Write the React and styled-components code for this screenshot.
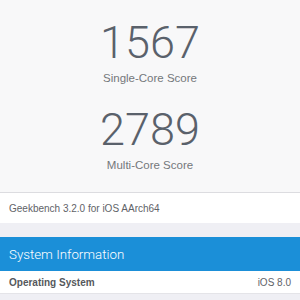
import React from "react";
import styled, { createGlobalStyle } from "styled-components";

const GlobalStyle = createGlobalStyle`
  html, body {
    margin: 0;
    padding: 0;
    background: #efeff4;
  }
  body {
    font-family: "Liberation Sans", Arial, sans-serif;
    -webkit-font-smoothing: antialiased;
  }
`

const Page = styled.div`
  width: 300px;
  height: 300px;
  overflow: hidden;
  display: flex;
  flex-direction: column;
  background: #efeff4;
`

const ScorePanel = styled.div`
  background: #f8f8f9;
  border-bottom: 1px solid #dcdce0;
  display: flex;
  flex-direction: column;
  align-items: center;
  padding-top: 18px;
  height: 174px;
`

const ScoreBlock = styled.div`
  display: flex;
  flex-direction: column;
  align-items: center;
  height: 89px;
`

const ScoreValue = styled.div`
  font-family: "Roboto", "Liberation Sans", sans-serif;
  font-weight: 300;
  font-size: 45px;
  line-height: 50px;
  color: #5a616b;
`

const ScoreLabel = styled.div`
  font-size: 11.5px;
  line-height: 14px;
  margin-top: 3px;
  color: #74777b;
`

const VersionRow = styled.div`
  background: #ffffff;
  height: 30px;
  display: flex;
  align-items: center;
  padding: 0 9px;
  font-size: 10px;
  color: #5f6368;
`

const Gap = styled.div`
  height: 14px;
`

const SectionHeader = styled.div`
  background: #1b8fd8;
  height: 34px;
  display: flex;
  align-items: center;
  padding: 0 9px;
  font-family: "Roboto", "Liberation Sans", sans-serif;
  font-weight: 300;
  font-size: 13.3px;
  color: #ffffff;
`

const InfoRow = styled.div`
  background: #ffffff;
  height: 22px;
  display: flex;
  align-items: center;
  justify-content: space-between;
  padding: 0 9px;
  font-size: 10px;
  border-bottom: 1px solid #e4e4e8;
`

const InfoKey = styled.span`
  font-weight: bold;
  color: #55585c;
`

const InfoValue = styled.span`
  color: #5f6368;
`

export default function App() {
  return (
    <Page>
      <GlobalStyle />
      <ScorePanel>
        <ScoreBlock>
          <ScoreValue>1567</ScoreValue>
          <ScoreLabel>Single-Core Score</ScoreLabel>
        </ScoreBlock>
        <ScoreBlock>
          <ScoreValue>2789</ScoreValue>
          <ScoreLabel>Multi-Core Score</ScoreLabel>
        </ScoreBlock>
      </ScorePanel>
      <VersionRow>Geekbench 3.2.0 for iOS AArch64</VersionRow>
      <Gap />
      <SectionHeader>System Information</SectionHeader>
      <InfoRow>
        <InfoKey>Operating System</InfoKey>
        <InfoValue>iOS 8.0</InfoValue>
      </InfoRow>
    </Page>
  );
}
